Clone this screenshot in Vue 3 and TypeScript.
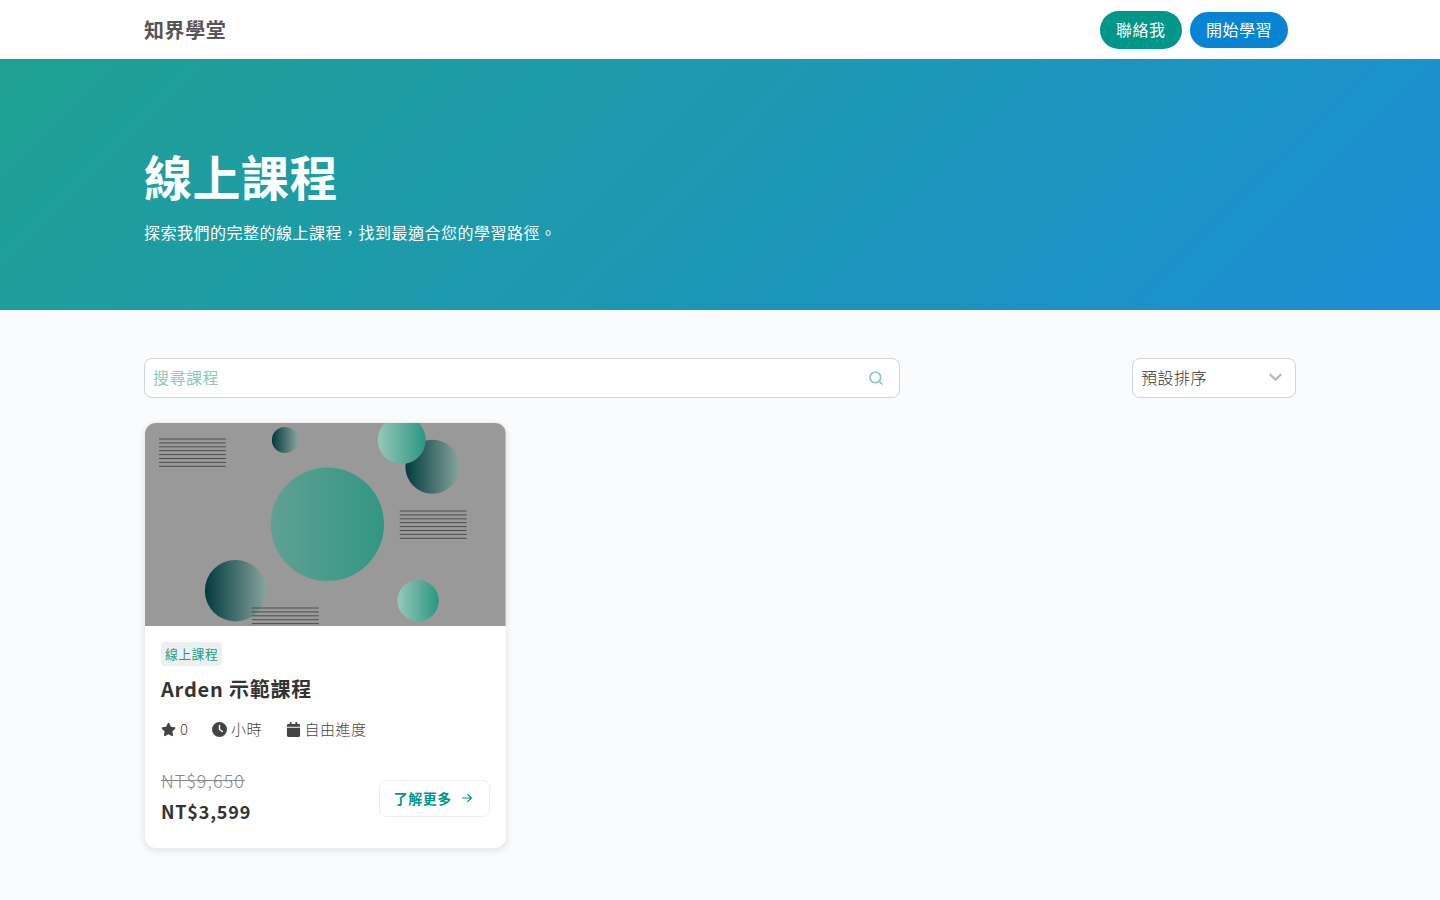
<script setup lang="ts">
// Course listing page: top nav, gradient hero, filters and one course card.
const stripeRows = [0, 1, 2, 3, 4, 5, 6, 7];
const stripeBlocks = [
  { x: 14, y: 16, rows: 8 },
  { x: 255, y: 88, rows: 8 },
  { x: 107, y: 185, rows: 5 },
];
</script>

<template>
  <div class="page">
    <header class="nav">
      <div class="nav-inner">
        <span class="logo">知界學堂</span>
        <div class="nav-actions">
          <a class="pill pill-green">聯絡我</a>
          <a class="pill pill-blue">開始學習</a>
        </div>
      </div>
    </header>

    <section class="hero">
      <div class="wrap">
        <h1>線上課程</h1>
        <p>探索我們的完整的線上課程，找到最適合您的學習路徑。</p>
      </div>
    </section>

    <main class="wrap content">
      <div class="filters">
        <div class="search">
          <input type="text" placeholder="搜尋課程" />
          <svg class="search-icon" viewBox="1.500 1.500 21 21" fill="none" stroke="currentColor" stroke-width="2.6" stroke-linecap="round">
            <circle cx="11" cy="11" r="8" />
            <path d="M21 21l-4.300-4.300" />
          </svg>
        </div>
        <div class="sort">
          <span>預設排序</span>
          <svg viewBox="0 0 16 16" fill="none" stroke="currentColor" stroke-width="2.2" stroke-linecap="round" stroke-linejoin="round">
            <path d="M2.500 5l5.500 5.500L13.500 5" />
          </svg>
        </div>
      </div>

      <div class="grid">
        <article class="card">
          <svg class="cover" viewBox="0 0 361 203" preserveAspectRatio="none">
            <defs>
              <linearGradient id="dark">
                <stop offset="0" stop-color="#023a3d" />
                <stop offset="1" stop-color="#86a39e" />
              </linearGradient>
              <linearGradient id="light">
                <stop offset="0" stop-color="#97c8ba" />
                <stop offset="1" stop-color="#2a9681" />
              </linearGradient>
              <linearGradient id="core">
                <stop offset="0" stop-color="#5fa094" />
                <stop offset="1" stop-color="#329683" />
              </linearGradient>
            </defs>
            <rect width="361" height="203" fill="#999" />
            <circle cx="182.600" cy="101.300" r="56.700" fill="url(#core)" />
            <circle cx="140" cy="17" r="13" fill="url(#dark)" />
            <circle cx="287.600" cy="43.700" r="27" fill="url(#dark)" />
            <circle cx="257" cy="17" r="24" fill="url(#light)" />
            <circle cx="90.600" cy="167.700" r="30.700" fill="url(#dark)" />
            <circle cx="273.300" cy="177.700" r="20.700" fill="url(#light)" />
            <g v-for="block in stripeBlocks" :key="block.x" stroke="#4d4d4d" stroke-width="1">
              <line
                v-for="row in stripeRows.slice(0, block.rows)"
                :key="row"
                :x1="block.x"
                :x2="block.x + 67"
                :y1="block.y + row * 3.900"
                :y2="block.y + row * 3.900"
              />
            </g>
          </svg>

          <div class="card-body">
            <span class="tag">線上課程</span>
            <h2>Arden 示範課程</h2>
            <div class="meta">
              <span class="meta-item">
                <svg viewBox="0 0 576 512" fill="currentColor"><path d="M316.900 18C311.600 7 300.400 0 288.100 0s-23.400 7-28.800 18L195 150.300 51.400 171.500c-12 1.800-22 10.200-25.700 21.700s-.7 24.200 7.900 32.700L137.800 329 113.200 474.700c-2 12 3 24.200 12.900 31.300s23 8 33.800 2.300l128.300-68.500 128.300 68.500c10.800 5.700 23.900 4.900 33.800-2.300s14.900-19.300 12.900-31.300L438.500 329 542.700 225.900c8.600-8.500 11.700-21.200 7.900-32.700s-13.700-19.900-25.700-21.700L381.200 150.300 316.900 18z" /></svg>
                0
              </span>
              <span class="meta-item">
                <svg viewBox="0 0 512 512" fill="currentColor"><path d="M256 0a256 256 0 1 1 0 512A256 256 0 1 1 256 0zM232 120V256c0 8 4 15.500 10.700 20l96 64c11 7.400 25.900 4.400 33.300-6.700s4.400-25.900-6.700-33.300L280 243.200V120c0-13.300-10.700-24-24-24s-24 10.700-24 24z" /></svg>
                小時
              </span>
              <span class="meta-item">
                <svg class="tall" viewBox="0 0 448 512" fill="currentColor"><path d="M96 32V64H48C21.500 64 0 85.500 0 112v48H448V112c0-26.500-21.500-48-48-48H352V32c0-17.700-14.300-32-32-32s-32 14.300-32 32V64H160V32c0-17.700-14.300-32-32-32S96 14.300 96 32zM448 192H0V464c0 26.500 21.500 48 48 48H400c26.500 0 48-21.500 48-48V192z" /></svg>
                自由進度
              </span>
            </div>
            <div class="card-foot">
              <div class="prices">
                <span class="old">NT$9,650</span>
                <span class="now">NT$3,599</span>
              </div>
              <a class="more">
                了解更多
                <svg viewBox="0 0 16 16" fill="none" stroke="currentColor" stroke-width="1.400" stroke-linecap="round" stroke-linejoin="round">
                  <path d="M3 8h10M8.800 3.800L13 8l-4.200 4.200" />
                </svg>
              </a>
            </div>
          </div>
        </article>
      </div>
    </main>
  </div>
</template>

<style>
html,
body {
  margin: 0;
  background: #f9fbfd;
}
</style>

<style scoped>
.page {
  min-height: 900px;
  background: #f9fbfd;
  color: #333;
  font-family: "Noto Sans CJK TC", "Noto Sans", sans-serif;
  letter-spacing: 0.5px;
}
.nav {
  height: 59px;
  background: #fff;
}
.nav-inner {
  width: 1152px;
  height: 100%;
  margin: 0 auto;
  padding-right: 8px;
  box-sizing: border-box;
  display: flex;
  align-items: center;
  justify-content: space-between;
}
.logo {
  font-size: 20px;
  font-weight: 700;
  letter-spacing: 0.6px;
  color: #555;
}
.nav-actions {
  display: flex;
  align-items: center;
  gap: 8px;
}
.pill {
  display: flex;
  align-items: center;
  height: 36px;
  box-sizing: border-box;
  padding: 0 16px 2px;
  border-radius: 19px;
  color: #fff;
  font-size: 16px;
}
.pill-green {
  height: 38px;
  padding-left: 15.5px;
  padding-right: 16.5px;
  background: #009688;
}
.pill-blue {
  background: #0984d4;
}
.hero {
  height: 251px;
  box-sizing: border-box;
  padding-top: 87px;
  background: linear-gradient(135deg, #1ea192 0%, #1a8fd6 100%);
  color: #fff;
}
.wrap {
  width: 1152px;
  margin: 0 auto;
}
.hero h1 {
  margin: 0 0 16px;
  font-size: 48px;
  line-height: 58px;
  font-weight: 700;
}
.hero p {
  margin: 0;
  font-size: 16px;
  line-height: 24px;
}
.content {
  padding-top: 48px;
}
.filters {
  display: flex;
  justify-content: space-between;
  margin-bottom: 24px;
}
.search {
  position: relative;
  width: 756px;
}
.search input {
  display: block;
  width: 100%;
  height: 40px;
  box-sizing: border-box;
  padding: 0 8px 2px;
  border: 1px solid #cfd4d8;
  border-radius: 8px;
  background: #fff;
  font: inherit;
  font-size: 16px;
  letter-spacing: 0.5px;
  outline: none;
}
.search input::placeholder {
  color: #8ccbb8;
  opacity: 1;
}
.search-icon {
  position: absolute;
  top: 13px;
  right: 17px;
  width: 14px;
  height: 14px;
  color: #8ccbb8;
}
.sort {
  width: 164px;
  height: 40px;
  box-sizing: border-box;
  padding: 0 12px 2px 8px;
  display: flex;
  align-items: center;
  justify-content: space-between;
  border: 1px solid #cfd4d8;
  border-radius: 8px;
  background: #fff;
  font-size: 16px;
  font-weight: 300;
  color: #333;
}
.sort svg {
  width: 15px;
  height: 15px;
  color: #b5b5b5;
}
.grid {
  display: grid;
  grid-template-columns: repeat(3, 1fr);
  gap: 32px;
}
.card {
  border: 1px solid #eceef0;
  border-radius: 12px;
  background: #fff;
  overflow: hidden;
  box-shadow: 0 2px 6px rgba(0, 0, 0, 0.1);
}
.cover {
  display: block;
  width: 100%;
  height: 203px;
}
.card-body {
  padding: 16px 16px 21px;
}
.tag {
  display: inline-block;
  padding: 0 4px;
  height: 24px;
  line-height: 24px;
  border-radius: 4px;
  background: #eef0f0;
  color: #1f9c88;
  font-size: 12.8px;
  vertical-align: top;
}
.card-body h2 {
  margin: 7px 0 0;
  font-size: 20px;
  line-height: 32px;
  font-weight: 700;
  letter-spacing: 0.8px;
  color: #333;
}
.meta {
  display: flex;
  gap: 23.5px;
  margin-top: 12px;
  font-size: 15px;
  line-height: 24px;
  font-weight: 300;
  color: #444;
}
.meta-item {
  display: flex;
  align-items: center;
  gap: 4px;
}
.meta-item svg {
  height: 15px;
  width: 15px;
  color: #444;
}
.card-foot {
  display: flex;
  align-items: center;
  justify-content: space-between;
  margin-top: 25px;
}
.prices {
  display: flex;
  flex-direction: column;
  gap: 1px;
}
.old {
  font-size: 18px;
  line-height: 28px;
  font-weight: 300;
  letter-spacing: 1px;
  color: #888;
  text-decoration: line-through;
}
.now {
  font-size: 18px;
  line-height: 32px;
  font-weight: 700;
  letter-spacing: 0.8px;
  color: #333;
}
.more {
  display: flex;
  align-items: center;
  gap: 8px;
  margin-top: 4px;
  height: 37px;
  box-sizing: border-box;
  padding: 0 15px 1px 14px;
  border: 1px solid #eeeeee;
  border-radius: 8px;
  color: #009688;
  font-size: 14px;
  font-weight: 700;
}
.more svg {
  width: 14px;
  height: 14px;
}
</style>
